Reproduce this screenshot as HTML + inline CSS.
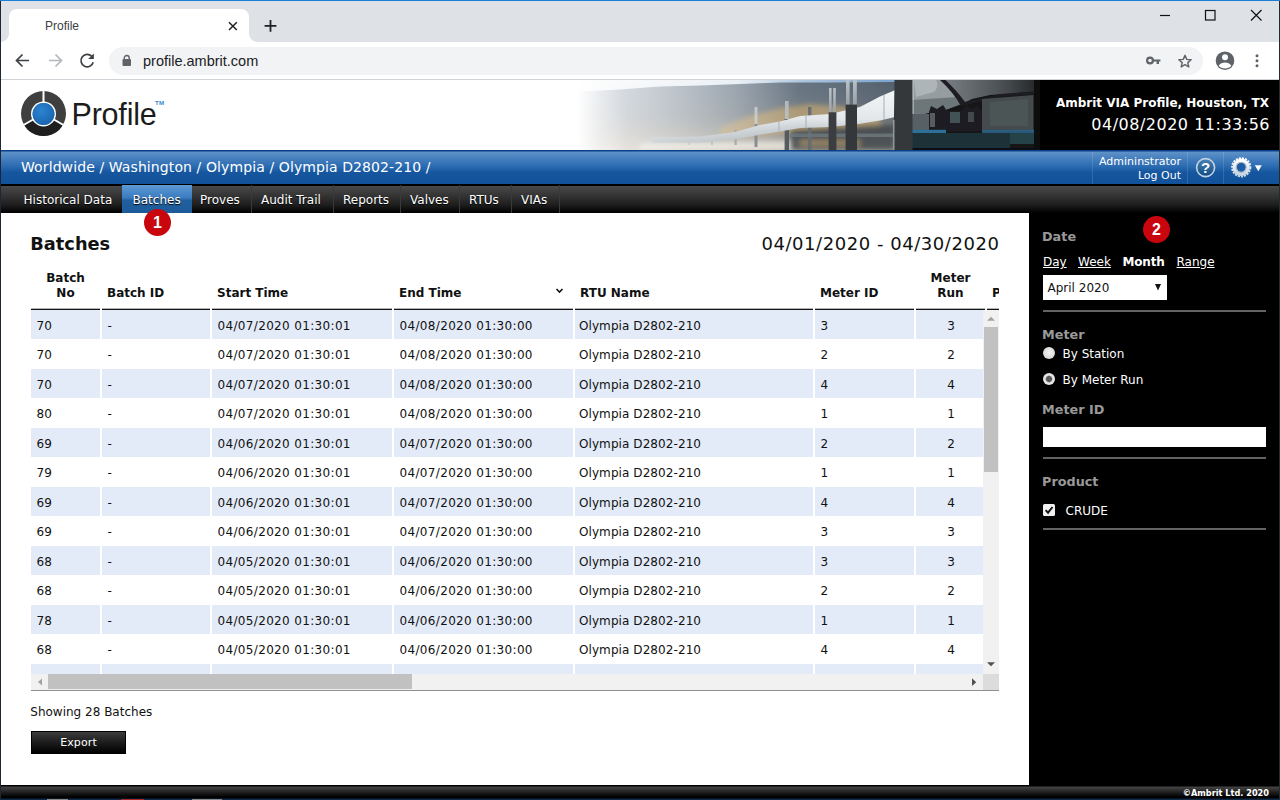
<!DOCTYPE html>
<html lang="en">
<head>
<meta charset="utf-8">
<title>Profile</title>
<style>
*{box-sizing:border-box;margin:0;padding:0}
html,body{width:1280px;height:800px;overflow:hidden;background:#fff}
body{font-family:"DejaVu Sans","Liberation Sans",sans-serif;font-size:12px;color:#111}
#win{position:relative;width:1280px;height:800px;overflow:hidden;background:#fff}
.abs{position:absolute}
.ui{font-family:"Liberation Sans",sans-serif}
.dv{font-family:"DejaVu Sans","Liberation Sans",sans-serif}
/* chrome */
#topline{left:0;top:0;width:1280px;height:1px;background:#1b7fd6}
#tabstrip{left:0;top:1px;width:1280px;height:41px;background:#dee1e6}
#tab{left:9px;top:9px;width:240px;height:33px;background:#fff;border-radius:8px 8px 0 0}
#tab:before,#tab:after{content:"";position:absolute;bottom:0;width:8px;height:8px;background:radial-gradient(circle at 0 0,rgba(255,255,255,0) 7.5px,#fff 8px)}
#tab:before{left:-8px}
#tab:after{right:-8px;background:radial-gradient(circle at 100% 0,rgba(255,255,255,0) 7.5px,#fff 8px)}
#tabtitle{left:45px;top:19px;font-size:12px;line-height:14px;color:#3c4043}
#toolbar{left:0;top:42px;width:1280px;height:37px;background:#fff}
#tbline{left:0;top:79px;width:1280px;height:1px;background:#cfd2d6}
#pill{left:109px;top:47px;width:1094px;height:28px;border-radius:14px;background:#f1f3f4}
#url{left:143px;top:52px;font-size:14.5px;line-height:18px;color:#202124}
#lborder{left:0;top:1px;width:1px;height:799px;background:#1c2733;z-index:50}
#rborder{left:1279px;top:1px;width:1px;height:799px;background:#1f2f2c;z-index:50}
/* app header */
#hdr{left:1px;top:80px;width:1278px;height:70px;background:#fff;overflow:hidden}
#crumb{left:1px;top:150px;width:1278px;height:35px;background:linear-gradient(#0a3f8a 0,#0a3f8a 1px,#5e92c8 2px,#3f7abb 30%,#2a6ab0 48%,#15569e 64%,#11519a 100%)}
#crumbtxt{left:20px;top:7px;font-size:14px;line-height:20px;color:#fff;white-space:nowrap;letter-spacing:.1px}
#nav{left:1px;top:184px;width:1278px;height:29px;background:linear-gradient(#000 0,#000 1.500px,#484848 2.500px,#343434 40%,#1e1e1e 72%,#0a0a0a 90%,#000 100%)}
.ni{position:absolute;top:1px;height:28px;line-height:30px;color:#fff;font-size:12px;text-align:left;padding-left:9px;border-right:1px solid #3a3a3a;white-space:nowrap;text-shadow:0 1px 1px #000}
.ni.act{background:linear-gradient(#5d9bd6 0,#3b7cc0 45%,#20609f 55%,#1d5a99 100%);border-right:0}
/* content */
#content{left:1px;top:213px;width:1028px;height:572px;background:#fff}
#side{left:1029px;top:213px;width:250px;height:572px;background:#000;color:#fff}
#footer{left:1px;top:785px;width:1278px;height:15px;background:linear-gradient(#000 0,#000 1px,#444 2px,#1a1a1a 8px,#000 12px,#000 13px,#0e2a47 14px)}
#copy{right:10px;top:2.5px;font-size:8.2px;line-height:11px;font-weight:bold;color:#fff;white-space:nowrap}

.h1{font-family:"DejaVu Sans","Liberation Sans",sans-serif;font-weight:bold;font-size:17.8px;line-height:24px;color:#111;white-space:nowrap}
.rng{font-size:18px;line-height:24px;color:#111;white-space:nowrap;letter-spacing:.55px}
.th{font-weight:bold;font-size:12px;line-height:14.5px;color:#111;padding-left:5px;white-space:nowrap;overflow:hidden}
.th.c{text-align:center;padding-left:0}
.hb{height:2px;background:linear-gradient(#b5b5b5 0,#b5b5b5 50%,#141414 50%,#141414 100%)}
.rb{left:0;width:952px;height:29px;background:#e3ebf8}
.row{left:0;width:952px;height:29.5px;line-height:33.5px;white-space:nowrap}
.td{position:absolute;top:0;padding-left:5.5px;font-size:12px;color:#111}
.td.dt{letter-spacing:.34px}
.td.nm{}
.td.rt{letter-spacing:.08px;padding-left:4px}
.vs{top:0;width:2px;height:364px;background:#fff}
#export{width:95px;height:23px;line-height:22px;text-align:center;color:#fff;font-size:11px;background:linear-gradient(#3c3c3c 0,#1c1c1c 50%,#000 100%);border:1px solid #000;letter-spacing:.1px}

.sl{font-weight:bold;font-size:12.8px;line-height:16px;color:#999;white-space:nowrap}
.lk{font-size:12px;line-height:16px;color:#fff;white-space:nowrap}
.badge{width:27px;height:27px;border-radius:50%;background:#c9060e;color:#fff;font-family:"Liberation Sans",sans-serif;font-weight:bold;font-size:16px;line-height:27px;text-align:center;z-index:40}
</style>
</head>
<body>
<div id="win">
<div id="topline" class="abs"></div>
<div id="tabstrip" class="abs"></div>
<div id="tab" class="abs"></div>
<div id="tabtitle" class="abs ui">Profile</div>
<div id="toolbar" class="abs"></div>
<div id="tbline" class="abs"></div>
<div id="pill" class="abs"></div>
<div id="url" class="abs ui">profile.ambrit.com</div>
<svg class="abs" style="left:0;top:0" width="1280" height="80" viewBox="0 0 1280 80">
<!-- tab close -->
<path d="M229 22.200l7.800 7.800M236.800 22.200l-7.800 7.800" stroke="#1f2123" stroke-width="1.500" fill="none"/>
<!-- new tab plus -->
<path d="M264.600 25.800h11.800M270.500 19.900v11.800" stroke="#1f2123" stroke-width="1.800" fill="none"/>
<!-- window controls -->
<path d="M1160 15.5h10" stroke="#111" stroke-width="1.2" fill="none"/>
<rect x="1205.5" y="10.5" width="9.5" height="9.5" stroke="#111" stroke-width="1.2" fill="none"/>
<path d="M1251 10l10.5 10.5M1261.500 10l-10.500 10.500" stroke="#111" stroke-width="1.2" fill="none"/>
<!-- back -->
<path d="M29 60.500h-12M22.500 54.500l-6 6 6 6" stroke="#3c4043" stroke-width="1.7" fill="none"/>
<!-- forward -->
<path d="M49 60.500h12M55.500 54.500l6 6-6 6" stroke="#b4b7bb" stroke-width="1.7" fill="none"/>
<!-- reload -->
<path d="M91.600 56.200a6.200 6.200 0 1 0 1.600 6" stroke="#3c4043" stroke-width="1.7" fill="none"/>
<path d="M93.800 53.500v5.600h-5.600z" fill="#3c4043"/>
<!-- lock -->
<rect x="122.500" y="59" width="8.500" height="7" rx="1" fill="#5f6368"/>
<path d="M124.300 59.500v-1.600a2.450 2.450 0 0 1 4.900 0v1.600" stroke="#5f6368" stroke-width="1.400" fill="none"/>
<!-- key -->
<circle cx="1150" cy="60.500" r="2.900" stroke="#5f6368" stroke-width="2.200" fill="none"/>
<path d="M1153 59.400h7.400v2.200h-1.400v2.400h-2.400v-2.400h-3.600z" fill="#5f6368"/>
<!-- star -->
<path d="M1185 55.300l1.750 4.050 4.400 0.400-3.350 2.900 1 4.300-3.800-2.300-3.800 2.300 1-4.300-3.350-2.900 4.400-0.400z" stroke="#5f6368" stroke-width="1.400" fill="none" stroke-linejoin="round"/>
<!-- profile -->
<circle cx="1225" cy="60.700" r="9.300" fill="#5f6368"/>
<circle cx="1225" cy="57.300" r="3" fill="#fff"/>
<path d="M1218.700 65.700c1.400-2.300 3.800-3.300 6.300-3.300s4.900 1 6.300 3.300c-1.500 1.800-3.800 2.800-6.300 2.800s-4.800-1-6.300-2.800z" fill="#fff"/>
<!-- kebab -->
<circle cx="1257" cy="55.700" r="1.500" fill="#5f6368"/><circle cx="1257" cy="60.700" r="1.500" fill="#5f6368"/><circle cx="1257" cy="65.700" r="1.500" fill="#5f6368"/>
</svg>

<div id="hdr" class="abs">
<svg class="abs" style="left:19px;top:10.400px" width="50" height="50" viewBox="0 0 50 50">
<g transform="translate(23.500,23.500)">
<circle r="22.500" fill="#3f3f3f"/>
<path d="M-19.480 11.250A22.500 22.500 0 0 0 19.480 11.250L0 0z" fill="#1f1f1f"/>
<path d="M0 0V-23M0 0L19.920 11.500M0 0L-19.920 11.500" stroke="#fff" stroke-width="2" fill="none"/>
<circle cy="0.400" r="12.500" fill="#fff"/>
<circle cy="0.500" r="10.900" fill="#1e73be"/>
<circle cy="0.500" r="10.900" fill="url(#lg1)"/>
</g>
<defs><radialGradient id="lg1" cx="0.4" cy="0.35" r="0.8"><stop offset="0" stop-color="#2b84d2"/><stop offset="1" stop-color="#175fa6"/></radialGradient></defs>
</svg>
<div id="logotxt" class="abs ui" style="left:70.500px;top:16.300px;font-size:30.500px;line-height:36px;letter-spacing:-0.200px;color:#1c1c1c;white-space:nowrap">Profile</div>
<div class="abs ui" style="left:154px;top:19.200px;font-size:6.200px;line-height:7px;font-weight:bold;color:#3a86cf;letter-spacing:0.200px">TM</div>
<svg class="abs" style="left:569px;top:0" width="476" height="70" viewBox="570 80 476 70">
<defs>
<linearGradient id="pSky" x1="0" y1="0" x2="1" y2="0"><stop offset="0" stop-color="#f4f6f8"/><stop offset="0.350" stop-color="#e4ebf2"/><stop offset="0.500" stop-color="#a9c3dc"/><stop offset="0.700" stop-color="#74a0cc"/><stop offset="1" stop-color="#5c8fc4"/></linearGradient>
<linearGradient id="pHill" x1="0" y1="0" x2="1" y2="0"><stop offset="0" stop-color="#aab5c1"/><stop offset="0.250" stop-color="#95a1ae"/><stop offset="0.450" stop-color="#808d9a"/><stop offset="0.680" stop-color="#6a7784"/><stop offset="1" stop-color="#55616d"/></linearGradient>
<linearGradient id="pHaze" x1="0" y1="0" x2="0" y2="1"><stop offset="0" stop-color="#8a94a0" stop-opacity="0"/><stop offset="0.450" stop-color="#a59c8c" stop-opacity="0.200"/><stop offset="1" stop-color="#cfc6b4" stop-opacity="0.800"/></linearGradient>
<linearGradient id="pPipe" x1="0" y1="0" x2="0" y2="1"><stop offset="0" stop-color="#f5f7f8"/><stop offset="0.550" stop-color="#e3e7ea"/><stop offset="1" stop-color="#a4acb3"/></linearGradient>
<linearGradient id="pPipeR" x1="0" y1="0" x2="1" y2="0"><stop offset="0" stop-color="#8a9296"/><stop offset="0.350" stop-color="#6d7478"/><stop offset="0.700" stop-color="#474c4f"/><stop offset="1" stop-color="#1a1c1d"/></linearGradient>
<linearGradient id="pPost" x1="0" y1="0" x2="0" y2="1"><stop offset="0" stop-color="#b9c0c6"/><stop offset="1" stop-color="#98a0a7"/></linearGradient>
<linearGradient id="pFadeL" x1="0" y1="0" x2="1" y2="0"><stop offset="0" stop-color="#fff" stop-opacity="1"/><stop offset="0.015" stop-color="#fff" stop-opacity="1"/><stop offset="0.060" stop-color="#fff" stop-opacity="0.780"/><stop offset="0.120" stop-color="#fff" stop-opacity="0.560"/><stop offset="0.220" stop-color="#fff" stop-opacity="0.420"/><stop offset="0.350" stop-color="#fff" stop-opacity="0.250"/><stop offset="0.480" stop-color="#fff" stop-opacity="0"/></linearGradient>
<filter id="pBlur" x="-5%" y="-5%" width="110%" height="110%"><feGaussianBlur stdDeviation="0.600"/></filter>
<filter id="pBlur2" x="-10%" y="-30%" width="120%" height="160%"><feGaussianBlur stdDeviation="2.500"/></filter>
<clipPath id="pClip"><rect x="570" y="80" width="476" height="70"/></clipPath>
</defs>
<g clip-path="url(#pClip)">
<rect x="570" y="80" width="476" height="70" fill="url(#pSky)"/>
<g filter="url(#pBlur)">
<path d="M570 92L620 89.500L660 86.500L700 85.500L740 84L780 82.500L830 82.500L895 82L895 150H570z" fill="url(#pHill)"/>
<rect x="570" y="84" width="330" height="66" fill="url(#pHaze)"/>
</g>
<g filter="url(#pBlur2)">
<path d="M720 128L750 116L780 108L810 104L835 106L860 108L880 108L880 128L800 132L720 140z" fill="#c3a572" opacity="0.700"/>
<path d="M640 144L800 141L800 150L640 150z" fill="#e6e2d8" opacity="0.850"/>
<path d="M790 130L895 124L895 150L790 150z" fill="#3f464b" opacity="0.850"/>
<path d="M800 140L860 140L860 146L800 146z" fill="#c3a36e" opacity="0.600"/>
</g>
<g filter="url(#pBlur)">
<!-- distant posts -->
<rect x="734.500" y="130" width="2.200" height="15" fill="#7b8188" opacity="0.800"/>
<rect x="711" y="136" width="1.800" height="9" fill="#858a90" opacity="0.600"/>
<rect x="688" y="138" width="1.600" height="7" fill="#8a8f95" opacity="0.500"/>
<rect x="754.500" y="107" width="3" height="20" fill="#c2c8ce" opacity="0.800"/>
<rect x="754.500" y="124" width="3" height="23" fill="#686e74" opacity="0.900"/>
<rect x="785" y="101" width="3.600" height="19" fill="#b7bec5" opacity="0.850"/>
<rect x="784.600" y="119" width="4.400" height="31" fill="#4d5357"/>
<rect x="808" y="107" width="3.500" height="43" fill="#646b71" opacity="0.900"/>
<!-- cross beams under pipe -->
<path d="M790 133.500L895 133.500L895 137L790 137z" fill="#6b777d" opacity="0.850"/>
<!-- pipeline far -->
<path d="M652 137.500L700 136.500L735 132L760 125L780 121.500L800 116L830 114L860 107L880 96.400L893 91L895 90L895 117L880 120.500L860 123.800L830 127L800 128L780 131.400L760 134.700L735 139.500L700 142.500L652 142.500z" fill="url(#pPipe)"/>
<path d="M779 122v9M806 116v12M856 108.500v15.500M884 95v25" stroke="#9aa3aa" stroke-width="1.200" fill="none" opacity="0.700"/>
<!-- near posts -->
<rect x="829" y="88" width="2.600" height="26" fill="url(#pPost)"/>
<rect x="833.200" y="88" width="2.600" height="26" fill="url(#pPost)"/>
<rect x="828.600" y="112.300" width="7.800" height="37.700" fill="#3a3e41"/>
<rect x="846" y="80" width="3.600" height="26" fill="url(#pPost)"/>
<rect x="853" y="80" width="3.800" height="26" fill="url(#pPost)"/>
<rect x="845.600" y="104.600" width="11.400" height="45.400" fill="#34383b"/>
<!-- right side big pipe -->
<rect x="912" y="80" width="134" height="70" fill="#121415"/>
<path d="M912 80L1046 80L1046 90L1033 92L990 95L972 99L962 104L945 110L925 113.500L912 114z" fill="url(#pPipeR)"/>
<path d="M912 80L942 80C950 87 957 95 962 103L945 110L925 113.500L912 114z" fill="#959da1"/>
<path d="M914 80L936 80C938 84 938 88 934 92L916 97z" fill="#b4bbbe" opacity="0.800"/>
<path d="M912 100L958 97L962 104L945 110L925 113.500L912 114z" fill="#5d6568" opacity="0.700"/>
<path d="M940 80L945.500 80C953 87 960 95 965 102L1000 94L1033 91.500L1046 90L1046 93L1033 94.500L1000 97L966 105L961 106C956 97 949 88 940 80z" fill="#1c1f21"/>
<!-- left of saddles -->
<rect x="912" y="114" width="18" height="17" fill="#566165"/>
<!-- gravel -->
<path d="M982 99L1033.500 95L1033.500 131.500L982 131.500z" fill="#444b4e"/>
<path d="M990 102L1028 99L1028 126L990 126z" fill="#525a5d" opacity="0.600"/>
<!-- saddle supports -->
<path d="M929 112L931 106L937 109L943 105L947 111L962 111L966 105L972 109L978 105L982 112L982 131.500L929 131.500z" fill="#1b1e20"/>
<rect x="930" y="113" width="5" height="14" fill="#8a9093" opacity="0.550"/>
<rect x="950" y="112" width="10" height="11" fill="#4e6064" opacity="0.800"/>
<rect x="968" y="112" width="6" height="10" fill="#5d686b" opacity="0.600"/>
<!-- blue strip + teal beam -->
<rect x="912" y="129.800" width="34" height="3.200" fill="#2f6f9a"/>
<rect x="982" y="129.800" width="52" height="3.200" fill="#2a5f84" opacity="0.900"/>
<rect x="912" y="133" width="98" height="15" fill="#1f3338"/>
<rect x="1010" y="133" width="24" height="11" fill="#27424a"/>
<rect x="1034" y="80" width="12" height="70" fill="#0b0c0c"/>
<rect x="912" y="148" width="134" height="2" fill="#0d1112"/>
<!-- big post -->
<path d="M894.500 80L912.500 80L912.500 150L893.500 150z" fill="#34383a"/>
<rect x="893" y="120" width="1.600" height="30" fill="#a9aeb1" opacity="0.700"/>
<rect x="912.500" y="80" width="1.500" height="34" fill="#c5cacc" opacity="0.600"/>
</g>
<rect x="570" y="80" width="476" height="70" fill="url(#pFadeL)"/>
</g>
</svg>

<div class="abs" style="left:1039px;top:0;width:239px;height:70px;background:#000"></div>
<div class="abs" style="right:10px;top:15px;font-size:12px;line-height:16px;font-weight:bold;color:#fff;white-space:nowrap">Ambrit VIA Profile, Houston, TX</div>
<div class="abs dv" style="right:9px;top:35px;font-size:16px;line-height:20px;color:#fff;white-space:nowrap;letter-spacing:.5px">04/08/2020 11:33:56</div>

</div>
<div id="crumb" class="abs">
<div id="crumbtxt" class="abs">Worldwide / Washington / Olympia / Olympia D2802-210 /</div>
<div class="abs" style="left:1091px;top:2px;width:1px;height:32px;background:rgba(255,255,255,.13)"></div>
<div class="abs" style="left:1186px;top:2px;width:1px;height:32px;background:rgba(255,255,255,.13)"></div>
<div class="abs" style="left:1222px;top:2px;width:1px;height:32px;background:rgba(255,255,255,.13)"></div>
<div class="abs" style="right:98px;top:5px;font-size:11px;line-height:14px;color:#fff;text-align:right;white-space:nowrap">Admininstrator<br>Log Out</div>
<svg class="abs" style="left:1189px;top:3px" width="90" height="30" viewBox="1190 153 90 30">
<defs>
<linearGradient id="hg" x1="0" y1="0" x2="0" y2="1"><stop offset="0" stop-color="#4d82b3"/><stop offset="1" stop-color="#0e4c84"/></linearGradient>
<linearGradient id="gg" x1="0" y1="0" x2="0" y2="1"><stop offset="0" stop-color="#ffffff"/><stop offset="1" stop-color="#c9d6e4"/></linearGradient>
</defs>
<circle cx="1205.600" cy="167.600" r="9" fill="url(#hg)" stroke="#c3d2e1" stroke-width="1.600"/>
<text x="1205.600" y="173" text-anchor="middle" font-family="Liberation Sans, sans-serif" font-weight="bold" font-size="15" fill="#fff">?</text>
<g transform="translate(1241.200,167.300)">
<circle r="9.200" fill="none" stroke="url(#gg)" stroke-width="1.800" stroke-dasharray="2.100 1.030"/>
<circle r="6.700" fill="none" stroke="url(#gg)" stroke-width="4.000"/>
<circle r="4.900" fill="none" stroke="#a9b8c8" stroke-width="1.400"/>
<circle r="4.200" fill="#1c5da6"/>
</g>
<path d="M1254.800 165.200h7l-3.500 6z" fill="#fff"/>
</svg>

</div>
<div id="nav" class="abs">
<div class="ni" style="left:0;width:122px;padding-left:22.600px">Historical Data</div>
<div class="ni act" style="left:121px;width:70px;padding-left:10.5px">Batches</div>
<div class="ni" style="left:190px;width:61px">Proves</div>
<div class="ni" style="left:251px;width:82px">Audit Trail</div>
<div class="ni" style="left:333px;width:67px">Reports</div>
<div class="ni" style="left:400px;width:59px">Valves</div>
<div class="ni" style="left:459px;width:52px">RTUs</div>
<div class="ni" style="left:511px;width:48px">VIAs</div>

</div>
<div id="content" class="abs">
<!--CONTENT_START-->
<div class="abs h1" style="left:29.3px;top:19px">Batches</div>
<div class="abs rng dv" style="right:29.5px;top:19px">04/01/2020 - 04/30/2020</div>
<div class="abs th c" style="left:30px;top:58px;width:69px">Batch<br>No</div>
<div class="abs hb" style="left:30px;top:95px;width:69px"></div>
<div class="abs th" style="left:101px;top:72.5px;width:108px">Batch ID</div>
<div class="abs hb" style="left:101px;top:95px;width:108px"></div>
<div class="abs th" style="left:211px;top:72.5px;width:180px">Start Time</div>
<div class="abs hb" style="left:211px;top:95px;width:180px"></div>
<div class="abs th" style="left:393px;top:72.5px;width:179px">End Time</div>
<div class="abs hb" style="left:393px;top:95px;width:179px"></div>
<div class="abs th" style="left:574px;top:72.5px;width:238px">RTU Name</div>
<div class="abs hb" style="left:574px;top:95px;width:238px"></div>
<div class="abs th" style="left:814px;top:72.5px;width:99px">Meter ID</div>
<div class="abs hb" style="left:814px;top:95px;width:99px"></div>
<div class="abs th c" style="left:915px;top:58px;width:69px">Meter<br>Run</div>
<div class="abs hb" style="left:915px;top:95px;width:69px"></div>
<div class="abs th" style="left:986px;top:72.5px;width:12px">P</div>
<div class="abs hb" style="left:986px;top:95px;width:12px"></div>
<svg class="abs" style="left:554px;top:74px" width="9" height="8" viewBox="0 0 9 8"><path d="M1.500 2l3 3 3-3" stroke="#111" stroke-width="1.600" fill="none"/></svg>
<div class="abs" id="tb" style="left:30px;top:97px;width:952px;height:363.500px;overflow:hidden">
<div class="abs rb" style="top:0px"></div>
<div class="abs rb" style="top:59px"></div>
<div class="abs rb" style="top:118px"></div>
<div class="abs rb" style="top:177px"></div>
<div class="abs rb" style="top:236px"></div>
<div class="abs rb" style="top:295px"></div>
<div class="abs rb" style="top:354px"></div>
<div class="abs row" style="top:0px"><span class="td dv nm" style="left:0px">70</span><span class="td" style="left:71px">-</span><span class="td dv dt" style="left:181px">04/07/2020 01:30:01</span><span class="td dv dt" style="left:363px">04/08/2020 01:30:00</span><span class="td rt" style="left:544px">Olympia D2802-210</span><span class="td dv nm" style="left:784px">3</span><span class="td dv nm" style="left:885px;width:70px;text-align:center;padding:0">3</span></div>
<div class="abs row" style="top:29px"><span class="td dv nm" style="left:0px">70</span><span class="td" style="left:71px">-</span><span class="td dv dt" style="left:181px">04/07/2020 01:30:01</span><span class="td dv dt" style="left:363px">04/08/2020 01:30:00</span><span class="td rt" style="left:544px">Olympia D2802-210</span><span class="td dv nm" style="left:784px">2</span><span class="td dv nm" style="left:885px;width:70px;text-align:center;padding:0">2</span></div>
<div class="abs row" style="top:59px"><span class="td dv nm" style="left:0px">70</span><span class="td" style="left:71px">-</span><span class="td dv dt" style="left:181px">04/07/2020 01:30:01</span><span class="td dv dt" style="left:363px">04/08/2020 01:30:00</span><span class="td rt" style="left:544px">Olympia D2802-210</span><span class="td dv nm" style="left:784px">4</span><span class="td dv nm" style="left:885px;width:70px;text-align:center;padding:0">4</span></div>
<div class="abs row" style="top:88px"><span class="td dv nm" style="left:0px">80</span><span class="td" style="left:71px">-</span><span class="td dv dt" style="left:181px">04/07/2020 01:30:01</span><span class="td dv dt" style="left:363px">04/08/2020 01:30:00</span><span class="td rt" style="left:544px">Olympia D2802-210</span><span class="td dv nm" style="left:784px">1</span><span class="td dv nm" style="left:885px;width:70px;text-align:center;padding:0">1</span></div>
<div class="abs row" style="top:118px"><span class="td dv nm" style="left:0px">69</span><span class="td" style="left:71px">-</span><span class="td dv dt" style="left:181px">04/06/2020 01:30:01</span><span class="td dv dt" style="left:363px">04/07/2020 01:30:00</span><span class="td rt" style="left:544px">Olympia D2802-210</span><span class="td dv nm" style="left:784px">2</span><span class="td dv nm" style="left:885px;width:70px;text-align:center;padding:0">2</span></div>
<div class="abs row" style="top:147px"><span class="td dv nm" style="left:0px">79</span><span class="td" style="left:71px">-</span><span class="td dv dt" style="left:181px">04/06/2020 01:30:01</span><span class="td dv dt" style="left:363px">04/07/2020 01:30:00</span><span class="td rt" style="left:544px">Olympia D2802-210</span><span class="td dv nm" style="left:784px">1</span><span class="td dv nm" style="left:885px;width:70px;text-align:center;padding:0">1</span></div>
<div class="abs row" style="top:177px"><span class="td dv nm" style="left:0px">69</span><span class="td" style="left:71px">-</span><span class="td dv dt" style="left:181px">04/06/2020 01:30:01</span><span class="td dv dt" style="left:363px">04/07/2020 01:30:00</span><span class="td rt" style="left:544px">Olympia D2802-210</span><span class="td dv nm" style="left:784px">4</span><span class="td dv nm" style="left:885px;width:70px;text-align:center;padding:0">4</span></div>
<div class="abs row" style="top:206px"><span class="td dv nm" style="left:0px">69</span><span class="td" style="left:71px">-</span><span class="td dv dt" style="left:181px">04/06/2020 01:30:01</span><span class="td dv dt" style="left:363px">04/07/2020 01:30:00</span><span class="td rt" style="left:544px">Olympia D2802-210</span><span class="td dv nm" style="left:784px">3</span><span class="td dv nm" style="left:885px;width:70px;text-align:center;padding:0">3</span></div>
<div class="abs row" style="top:236px"><span class="td dv nm" style="left:0px">68</span><span class="td" style="left:71px">-</span><span class="td dv dt" style="left:181px">04/05/2020 01:30:01</span><span class="td dv dt" style="left:363px">04/06/2020 01:30:00</span><span class="td rt" style="left:544px">Olympia D2802-210</span><span class="td dv nm" style="left:784px">3</span><span class="td dv nm" style="left:885px;width:70px;text-align:center;padding:0">3</span></div>
<div class="abs row" style="top:265px"><span class="td dv nm" style="left:0px">68</span><span class="td" style="left:71px">-</span><span class="td dv dt" style="left:181px">04/05/2020 01:30:01</span><span class="td dv dt" style="left:363px">04/06/2020 01:30:00</span><span class="td rt" style="left:544px">Olympia D2802-210</span><span class="td dv nm" style="left:784px">2</span><span class="td dv nm" style="left:885px;width:70px;text-align:center;padding:0">2</span></div>
<div class="abs row" style="top:295px"><span class="td dv nm" style="left:0px">78</span><span class="td" style="left:71px">-</span><span class="td dv dt" style="left:181px">04/05/2020 01:30:01</span><span class="td dv dt" style="left:363px">04/06/2020 01:30:00</span><span class="td rt" style="left:544px">Olympia D2802-210</span><span class="td dv nm" style="left:784px">1</span><span class="td dv nm" style="left:885px;width:70px;text-align:center;padding:0">1</span></div>
<div class="abs row" style="top:324px"><span class="td dv nm" style="left:0px">68</span><span class="td" style="left:71px">-</span><span class="td dv dt" style="left:181px">04/05/2020 01:30:01</span><span class="td dv dt" style="left:363px">04/06/2020 01:30:00</span><span class="td rt" style="left:544px">Olympia D2802-210</span><span class="td dv nm" style="left:784px">4</span><span class="td dv nm" style="left:885px;width:70px;text-align:center;padding:0">4</span></div>
<div class="abs vs" style="left:69px"></div>
<div class="abs vs" style="left:179px"></div>
<div class="abs vs" style="left:361px"></div>
<div class="abs vs" style="left:542px"></div>
<div class="abs vs" style="left:782px"></div>
<div class="abs vs" style="left:883px"></div>
</div>
<div class="abs" style="left:982px;top:97px;width:16px;height:363.500px;background:#f1f1f1"></div>
<div class="abs" style="left:983px;top:114px;width:14px;height:145px;background:#c1c1c1"></div>
<svg class="abs" style="left:982px;top:97px" width="16" height="364" viewBox="0 0 16 364"><path d="M4 10.800l4-4 4 4z" fill="#a3a3a3"/><path d="M4 352.200l4 4 4-4z" fill="#505050"/></svg>
<div class="abs" style="left:30px;top:460.5px;width:968px;height:16px;background:#f1f1f1"></div>
<div class="abs" style="left:982px;top:460.5px;width:16px;height:16px;background:#dcdcdc"></div>
<div class="abs" style="left:47px;top:461.29999999999995px;width:364px;height:14.4px;background:#c1c1c1"></div>
<svg class="abs" style="left:30px;top:460.5px" width="951" height="16" viewBox="0 0 951 16"><path d="M11 4.500l-4 3.500 4 3.500z" fill="#a3a3a3"/><path d="M941 4.300l4.200 3.900-4.200 3.900z" fill="#505050"/></svg>
<div class="abs" style="left:30px;top:477px;width:968px;height:1px;background:#8f8f8f"></div>
<div class="abs" style="left:29.3px;top:491.29999999999995px;line-height:16px;white-space:nowrap">Showing 28 Batches</div>
<div class="abs" id="export" style="left:30px;top:518px">Export</div>
<!--CONTENT_END-->
</div>
<div id="side" class="abs">
<!--SIDE_START-->
<div class="abs sl" style="left:13px;top:16px">Date</div>
<div class="abs lk" style="left:14px;top:41px"><u>Day</u></div>
<div class="abs lk" style="left:49px;top:41px"><u>Week</u></div>
<div class="abs lk" style="left:93.5px;top:41px;font-weight:bold;letter-spacing:-.2px">Month</div>
<div class="abs lk" style="left:147.5px;top:41px"><u>Range</u></div>
<div class="abs" style="left:13.5px;top:62px;width:124.5px;height:25px;background:#fff;color:#111;line-height:27.5px;padding-left:5px;white-space:nowrap">April 2020</div>
<svg class="abs" style="left:125px;top:70px" width="8" height="9" viewBox="0 0 8 9"><path d="M1 1h6l-3 6.500z" fill="#111"/></svg>
<div class="abs" style="left:13.5px;top:97px;width:223.5px;height:2px;background:#636363"></div>
<div class="abs sl" style="left:13px;top:114.3px">Meter</div>
<div class="abs" style="left:13.5px;top:134.4px;width:12px;height:12px;border-radius:50%;background:radial-gradient(circle at 50% 45%,#f4f4f4 0,#d9d9d9 70%,#bdbdbd 100%)"></div>
<div class="abs lk" style="left:33.5px;top:133px">By Station</div>
<div class="abs" style="left:13.5px;top:160px;width:12px;height:12px;border-radius:50%;background:radial-gradient(circle at 50% 50%,#5a5a5a 0,#5a5a5a 30%,#ececec 46%,#e0e0e0 75%,#bdbdbd 100%)"></div>
<div class="abs lk" style="left:33.5px;top:159px">By Meter Run</div>
<div class="abs sl" style="left:13px;top:189.3px">Meter ID</div>
<div class="abs" style="left:13.5px;top:214px;width:223.5px;height:20px;background:#fff"></div>
<div class="abs" style="left:13.5px;top:244px;width:223.5px;height:2px;background:#636363"></div>
<div class="abs sl" style="left:13px;top:260.8px">Product</div>
<div class="abs" style="left:13.5px;top:290.7px;width:12px;height:12px;background:#f0f0f0;border-radius:1.500px"></div>
<svg class="abs" style="left:13.5px;top:290.7px" width="12" height="12" viewBox="0 0 12 12"><path d="M2.600 6.200l2.400 2.500 4.500-5.700" stroke="#111" stroke-width="1.900" fill="none"/></svg>
<div class="abs lk" style="left:36.5px;top:290px">CRUDE</div>
<div class="abs" style="left:13.5px;top:315px;width:223.5px;height:2px;background:#636363"></div>
<!--SIDE_END-->
</div>
<div id="footer" class="abs"><div id="copy" class="abs">©Ambrit Ltd. 2020</div></div>
<div class="abs" style="left:47px;top:799px;width:21px;height:1px;background:#8a8a8a"></div>
<div class="abs" style="left:121px;top:799px;width:23px;height:1px;background:#a82626"></div>
<div class="abs" style="left:192px;top:799px;width:30px;height:1px;background:#8a8a8a"></div>
<div id="lborder" class="abs"></div>
<div id="rborder" class="abs"></div>
<div class="abs badge" style="left:144px;top:208.5px">1</div>
<div class="abs badge" style="left:1143px;top:216px">2</div>
</div>
</body>
</html>
